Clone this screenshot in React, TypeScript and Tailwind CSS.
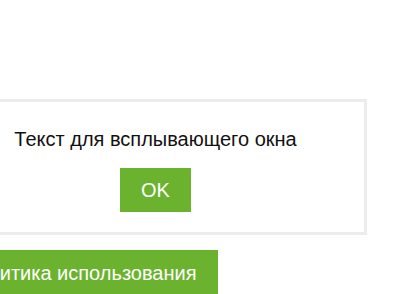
export default function App() {
  return (
    <div className="w-[403px] h-[294px] overflow-hidden bg-white font-['Liberation_Sans',Arial,sans-serif]">
      <div className="ml-[-56px] pt-[99px] flex flex-col items-start">
        {/* Всплывающее окно */}
        <div className="w-[423px] border-[3px] border-[#ececec] bg-white flex flex-col items-center pt-[27px] pb-[20px]">
          <p className="text-[20px] leading-5 text-[#111]">Текст для всплывающего окна</p>
          <button className="mt-[19px] w-[71px] h-[44px] bg-[#6bb32e] text-white text-[20px] leading-5">
            OK
          </button>
        </div>

        <button className="mt-[15px] h-[45px] pl-[19px] pr-[21px] bg-[#6bb32e] text-white text-[20px] leading-5">
          Политика использования
        </button>
      </div>
    </div>
  );
}
